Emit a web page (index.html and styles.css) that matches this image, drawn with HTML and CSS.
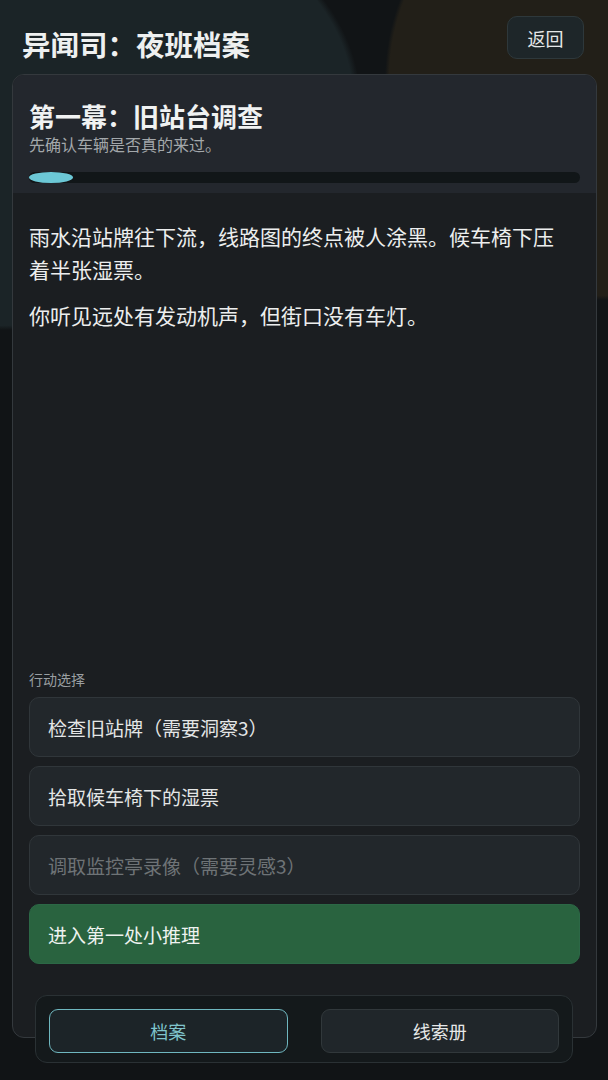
FILE: index.html
```html
<!DOCTYPE html>
<html lang="zh-CN">
<head>
    <meta charset="UTF-8">
    <meta name="viewport" content="width=device-width, initial-scale=1.0">
    <title>异闻司：夜班档案</title>
    <link rel="stylesheet" href="styles.css">
</head>
<body>

    <header class="topbar">
        <h1>异闻司：夜班档案</h1>
        <button class="back-btn" type="button">返回</button>
    </header>

    <main class="panel">
        <div class="panel-head">
            <h2>第一幕：旧站台调查</h2>
            <p class="goal">先确认车辆是否真的来过。</p>
            <div class="progress"><div class="progress-fill" style="width: 8%;"></div></div>
        </div>

        <div class="panel-body">
            <div class="story">
                <p>雨水沿站牌往下流，线路图的终点被人涂黑。候车椅下压着半张湿票。</p>
                <p>你听见远处有发动机声，但街口没有车灯。</p>
            </div>

            <div class="actions">
                <div class="actions-label">行动选择</div>
                <button class="choice" type="button">检查旧站牌（需要洞察3）</button>
                <button class="choice" type="button">拾取候车椅下的湿票</button>
                <button class="choice disabled" type="button" disabled>调取监控亭录像（需要灵感3）</button>
                <button class="choice primary" type="button">进入第一处小推理</button>
            </div>
        </div>
    </main>

    <nav class="bottom-nav">
        <button class="nav-btn active" type="button">档案</button>
        <button class="nav-btn" type="button">线索册</button>
    </nav>

</body>
</html>
```

FILE: styles.css
```css
body {
    margin: 0;
    height: 100vh;
    font-family: "Noto Sans CJK SC", "Noto Sans", sans-serif;
    color: #e9ebeb;
    background:
        radial-gradient(ellipse 360px 230px at 0 100px, #1b2427 98%, rgba(27, 36, 39, 0) 100%),
        radial-gradient(ellipse 215px 220px at 600px 80px, #221f18 98%, rgba(34, 31, 24, 0) 100%),
        #111416;
    display: flex;
    flex-direction: column;
    overflow: hidden;
}

button {
    font-family: inherit;
    cursor: pointer;
}

.topbar {
    display: flex;
    justify-content: space-between;
    align-items: flex-start;
    height: 58px;
    padding: 16px 24px 0 22px;
}

.topbar h1 {
    margin: 8px 0 0;
    font-size: 28.5px;
    line-height: 40px;
    font-weight: bold;
    color: #eef0f0;
}

.back-btn {
    width: 77px;
    height: 43px;
    border-radius: 10px;
    background: #1e2629;
    border: 1px solid #2e383b;
    color: #e6e8e8;
    font-size: 18px;
}

.panel {
    flex: 1;
    margin: 0 11px 42px 12px;
    border: 1px solid #34393d;
    border-radius: 12px;
    background: #1b1e21;
    display: flex;
    flex-direction: column;
    overflow: hidden;
}

.panel-head {
    background: #23272d;
    padding: 24px 16px 10px;
}

.panel-head h2 {
    margin: 0;
    font-size: 26px;
    line-height: 34px;
    font-weight: bold;
    color: #f0f2f2;
}

.goal {
    margin: 1px 0 0;
    font-size: 16px;
    line-height: 20px;
    color: #a3a8ab;
}

.progress {
    margin-top: 18px;
    height: 11px;
    border-radius: 6px;
    background: #111618;
}

.progress-fill {
    height: 100%;
    border-radius: 50%;
    background: #6cc8d6;
}

.panel-body {
    flex: 1;
    display: flex;
    flex-direction: column;
    padding: 27px 16px 73px;
}

.story {
    padding-right: 8px;
}

.story p {
    margin: 0 0 13px;
    font-size: 21px;
    line-height: 33px;
    color: #eceeee;
}

.actions {
    margin-top: auto;
    display: flex;
    flex-direction: column;
    gap: 9px;
}

.actions-label {
    font-size: 14px;
    line-height: 20px;
    color: #9a9fa2;
    margin-bottom: -3px;
    position: relative;
    top: -2px;
}

.choice {
    height: 60px;
    padding: 0 18px;
    text-align: left;
    font-size: 19px;
    color: #e4e6e6;
    background: #22272b;
    border: 1px solid #30363a;
    border-radius: 10px;
}

.choice.disabled {
    color: #6e7376;
    cursor: default;
}

.choice.primary {
    background: #29633f;
    border-color: #2c6846;
    color: #eef2ef;
}

.bottom-nav {
    position: fixed;
    left: 35px;
    right: 35px;
    bottom: 17px;
    height: 68px;
    box-sizing: border-box;
    padding: 13px;
    background: #14191b;
    border: 1px solid #2a3134;
    border-radius: 12px;
    display: grid;
    grid-template-columns: 1fr 1fr;
    gap: 33px;
}

.nav-btn {
    height: 44px;
    border-radius: 9px;
    background: #20262a;
    border: 1px solid #31383b;
    color: #e6e8e8;
    font-size: 18px;
}

.nav-btn.active {
    background: #1c2428;
    border-color: #6fb7bf;
    color: #7fc4cc;
}
```
